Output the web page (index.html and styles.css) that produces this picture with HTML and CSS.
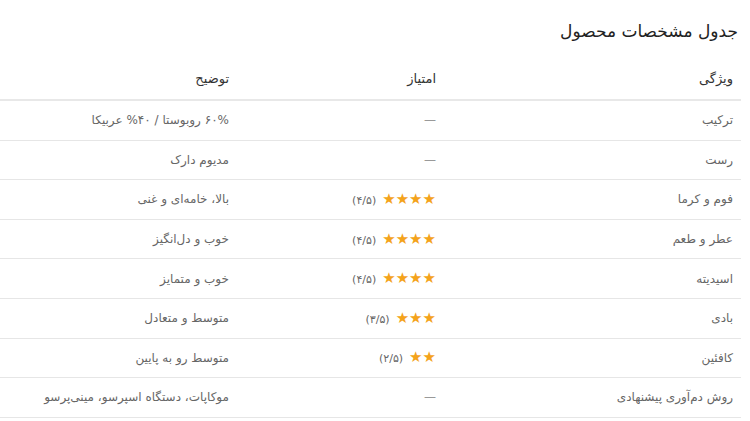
FILE: index.html
```html
<!DOCTYPE html>
<html lang="fa" dir="rtl">
<head>
<meta charset="utf-8">
<link rel="stylesheet" href="styles.css">
</head>
<body>
<div class="wrap">
  <h2 class="title">جدول مشخصات محصول</h2>
  <div class="table">
    <div class="row head">
      <div class="c1">ویژگی</div>
      <div class="c2">امتیاز</div>
      <div class="c3">توضیح</div>
    </div>
    <div class="row">
      <div class="c1">ترکیب</div>
      <div class="c2"><span class="dash">—</span></div>
      <div class="c3">۶۰% روبوستا / ۴۰% عربیکا</div>
    </div>
    <div class="row">
      <div class="c1">رست</div>
      <div class="c2"><span class="dash">—</span></div>
      <div class="c3">مدیوم دارک</div>
    </div>
    <div class="row">
      <div class="c1">فوم و کرما</div>
      <div class="c2"><span class="stars">★★★★</span><span class="score">(۴/۵)</span></div>
      <div class="c3">بالا، خامه‌ای و غنی</div>
    </div>
    <div class="row">
      <div class="c1">عطر و طعم</div>
      <div class="c2"><span class="stars">★★★★</span><span class="score">(۴/۵)</span></div>
      <div class="c3">خوب و دل‌انگیز</div>
    </div>
    <div class="row">
      <div class="c1">اسیدیته</div>
      <div class="c2"><span class="stars">★★★★</span><span class="score">(۴/۵)</span></div>
      <div class="c3">خوب و متمایز</div>
    </div>
    <div class="row">
      <div class="c1">بادی</div>
      <div class="c2"><span class="stars">★★★</span><span class="score">(۳/۵)</span></div>
      <div class="c3">متوسط و متعادل</div>
    </div>
    <div class="row">
      <div class="c1">کافئین</div>
      <div class="c2"><span class="stars">★★</span><span class="score">(۲/۵)</span></div>
      <div class="c3">متوسط رو به پایین</div>
    </div>
    <div class="row">
      <div class="c1">روش دم‌آوری پیشنهادی</div>
      <div class="c2"><span class="dash">—</span></div>
      <div class="c3">موکاپات، دستگاه اسپرسو، مینی‌پرسو</div>
    </div>
  </div>
</div>
</body>
</html>
```
FILE: styles.css
```css
html, body {
  margin: 0;
  padding: 0;
  background: #fff;
}
body {
  font-family: "DejaVu Sans", sans-serif;
  direction: rtl;
}
.wrap {
  width: 741px;
  margin-left: 0;
  margin-right: auto;
}
.title {
  margin: 0;
  padding: 18px 3px 0 0;
  height: 42px;
  box-sizing: border-box;
  font-size: 17px;
  font-weight: normal;
  color: #222;
  line-height: 26px;
}
.table {
  margin-top: 16px;
}
.row {
  display: grid;
  grid-template-columns: 297px 207px 237px;
  align-items: center;
  height: 39.6px;
  box-sizing: border-box;
  border-bottom: 1px solid #e6e6e6;
  font-size: 12px;
  color: #666;
}
.row > div {
  padding-right: 8px;
  white-space: nowrap;
}
.row.head {
  height: 43px;
  border-bottom: 2px solid #e8e8e8;
  color: #333;
  font-size: 13px;
  padding-bottom: 1px;
}
.dash {
  color: #999;
}
.stars {
  color: #f4a31b;
  font-size: 15px;
  line-height: 1;
  letter-spacing: -4px;
}
.score {
  color: #666;
  font-size: 11px;
  margin-right: 6px;
}
```
